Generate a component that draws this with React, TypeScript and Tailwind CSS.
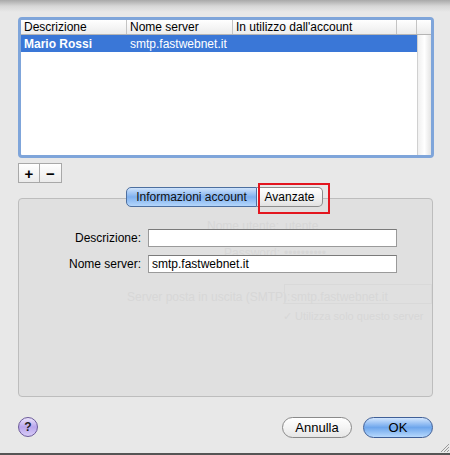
import React from "react";

const font = { fontFamily: '"Liberation Sans", Arial, sans-serif' };

function HeaderCell({ w, children, last }: { w: string; children?: React.ReactNode; last?: boolean }) {
  return (
    <div className={`${w} h-full flex items-center pl-[3px] ${last ? "" : "border-r border-[#c4c4c4]"} text-[12px] text-black leading-none`}>
      {children}
    </div>
  );
}

export default function App() {
  return (
    <div className="relative w-[450px] h-[455px] bg-[#e8e8e8] overflow-hidden text-black" style={font}>
      {/* top shadow */}
      <div className="absolute left-0 top-0 w-full h-[12px] bg-gradient-to-b from-[#a9a9a9] via-[#d6d6d6] to-[#e8e8e8] pointer-events-none" />

      <div className="flex flex-col pt-[17px] pl-[18px]">
        {/* table */}
        <div className="w-[416px] h-[141px] rounded-[4px] border-[3px] border-[#7fa5da] bg-white flex flex-col overflow-hidden">
          <div className="h-[15px] flex border-b border-[#b5b5b5] bg-gradient-to-b from-white to-[#ececec] shrink-0">
            <HeaderCell w="w-[106px]">Descrizione</HeaderCell>
            <HeaderCell w="w-[106px]">Nome server</HeaderCell>
            <HeaderCell w="w-[164px]">In utilizzo dall'account</HeaderCell>
            <HeaderCell w="w-[20px]" />
            <HeaderCell w="flex-1" last />
          </div>
          <div className="flex flex-1">
            <div className="w-[396px] flex flex-col">
              <div className="h-[17px] bg-[#3a77d7] flex items-center text-white text-[12px] leading-none">
                <div className="w-[106px] pl-[3px] font-bold">Mario Rossi</div>
                <div className="w-[106px] pl-[3px]">smtp.fastwebnet.it</div>
              </div>
            </div>
            <div className="flex-1 border-l border-[#d0d0d0] bg-gradient-to-r from-[#f0f0f0] via-white to-[#e4e4e4]" />
          </div>
        </div>

        {/* + - */}
        <div className="mt-[5px] flex w-[44px] h-[20px] border border-[#a8a8a8] bg-gradient-to-b from-white to-[#ebebeb]">
          <div className="w-[21px] h-full flex items-center justify-center border-r border-[#a8a8a8] text-[15px] font-bold leading-none">+</div>
          <div className="flex-1 h-full flex items-center justify-center text-[15px] font-bold leading-none">−</div>
        </div>

        {/* tab box */}
        <div className="relative mt-[15px] w-[415px] h-[199px] rounded-[4px] border border-[#bdbdbd] bg-[#e0e0e0]">
          {/* ghost content */}
          <div className="absolute inset-0 text-[12px] text-[#d7d7d7] whitespace-nowrap pointer-events-none overflow-hidden">
            <div className="absolute left-[188px] top-[18px]">Nome utente:</div>
            <div className="absolute left-[266px] top-[18px]">utente</div>
            <div className="absolute left-[205px] top-[45px]">Password:</div>
            <div className="absolute left-[265px] top-[45px]">••••••••••</div>
            <div className="absolute left-[108px] top-[89px]">Server posta in uscita (SMTP):</div>
            <div className="absolute left-[265px] top-[85px] w-[148px] h-[20px] border border-[#d9d9d9] pl-[6px] pt-[3px]">smtp.fastwebnet.it</div>
            <div className="absolute left-[264px] top-[109px] text-[11px]">✓ Utilizza solo questo server</div>
          </div>

          {/* segmented control */}
          <div className="absolute left-[107px] top-[-12px] flex h-[20px] text-[12px] leading-none">
            <div className="w-[131px] h-full flex items-center justify-center rounded-l-[5px] border border-[#4d6f9f] bg-gradient-to-b from-[#cfe3fb] via-[#7fb0ee] to-[#b4d6fb] text-[#111]">
              Informazioni account
            </div>
            <div className="w-[66px] h-full flex items-center justify-center rounded-r-[5px] border border-l-0 border-[#8c8c8c] bg-gradient-to-b from-white via-[#f2f2f2] to-[#e2e2e2]">
              Avanzate
            </div>
          </div>
          {/* red highlight */}
          <div className="absolute left-[239px] top-[-16px] w-[72px] h-[31px] border-2 border-[#e3161f] pointer-events-none" />

          {/* fields */}
          <div className="relative flex flex-col gap-[8px] pt-[30px]">
            <div className="flex items-center h-[18px]">
              <div className="w-[123px] text-right text-[12px] pr-[1px]">Descrizione:</div>
              <div className="ml-[6px] w-[249px] h-[18px] border border-[#9a9a9a] border-t-[#7a7a7a] bg-white" />
            </div>
            <div className="flex items-center h-[18px]">
              <div className="w-[123px] text-right text-[12px] pr-[1px]">Nome server:</div>
              <div className="ml-[6px] w-[249px] h-[18px] border border-[#9a9a9a] border-t-[#7a7a7a] bg-white text-[12px] pl-[3px] leading-[16px]">
                smtp.fastwebnet.it
              </div>
            </div>
          </div>
        </div>

        {/* footer */}
        <div className="mt-[19px] flex items-center w-[415px] h-[22px]">
          <div className="w-[20px] h-[20px] rounded-full border border-[#6b5a9a] bg-gradient-to-b from-[#ece4fb] via-[#b9a5ec] to-[#d8ccf7] flex items-center justify-center text-[12px] font-bold leading-none text-[#222]">
            ?
          </div>
          <div className="flex-1" />
          <div className="w-[70px] h-[21px] rounded-full border border-[#8a8a8a] bg-gradient-to-b from-white via-[#f4f4f4] to-[#e6e6e6] flex items-center justify-center text-[13px] leading-none">
            Annulla
          </div>
          <div className="ml-[11px] w-[70px] h-[21px] rounded-full border border-[#3f5f97] bg-gradient-to-b from-[#d3e6fd] via-[#6ea6ec] to-[#b6d8fc] flex items-center justify-center text-[13px] leading-none">
            OK
          </div>
        </div>
      </div>

      {/* resize grip */}
      <svg className="absolute right-[1px] bottom-[3px]" width="10" height="10" viewBox="0 0 10 10">
        <path d="M10 2 L2 10 M10 5 L5 10 M10 8 L8 10" stroke="#9a9a9a" strokeWidth="1" />
      </svg>
      {/* bottom edge */}
      <div className="absolute left-0 bottom-0 w-full h-[2px] bg-[#555]" />
    </div>
  );
}
